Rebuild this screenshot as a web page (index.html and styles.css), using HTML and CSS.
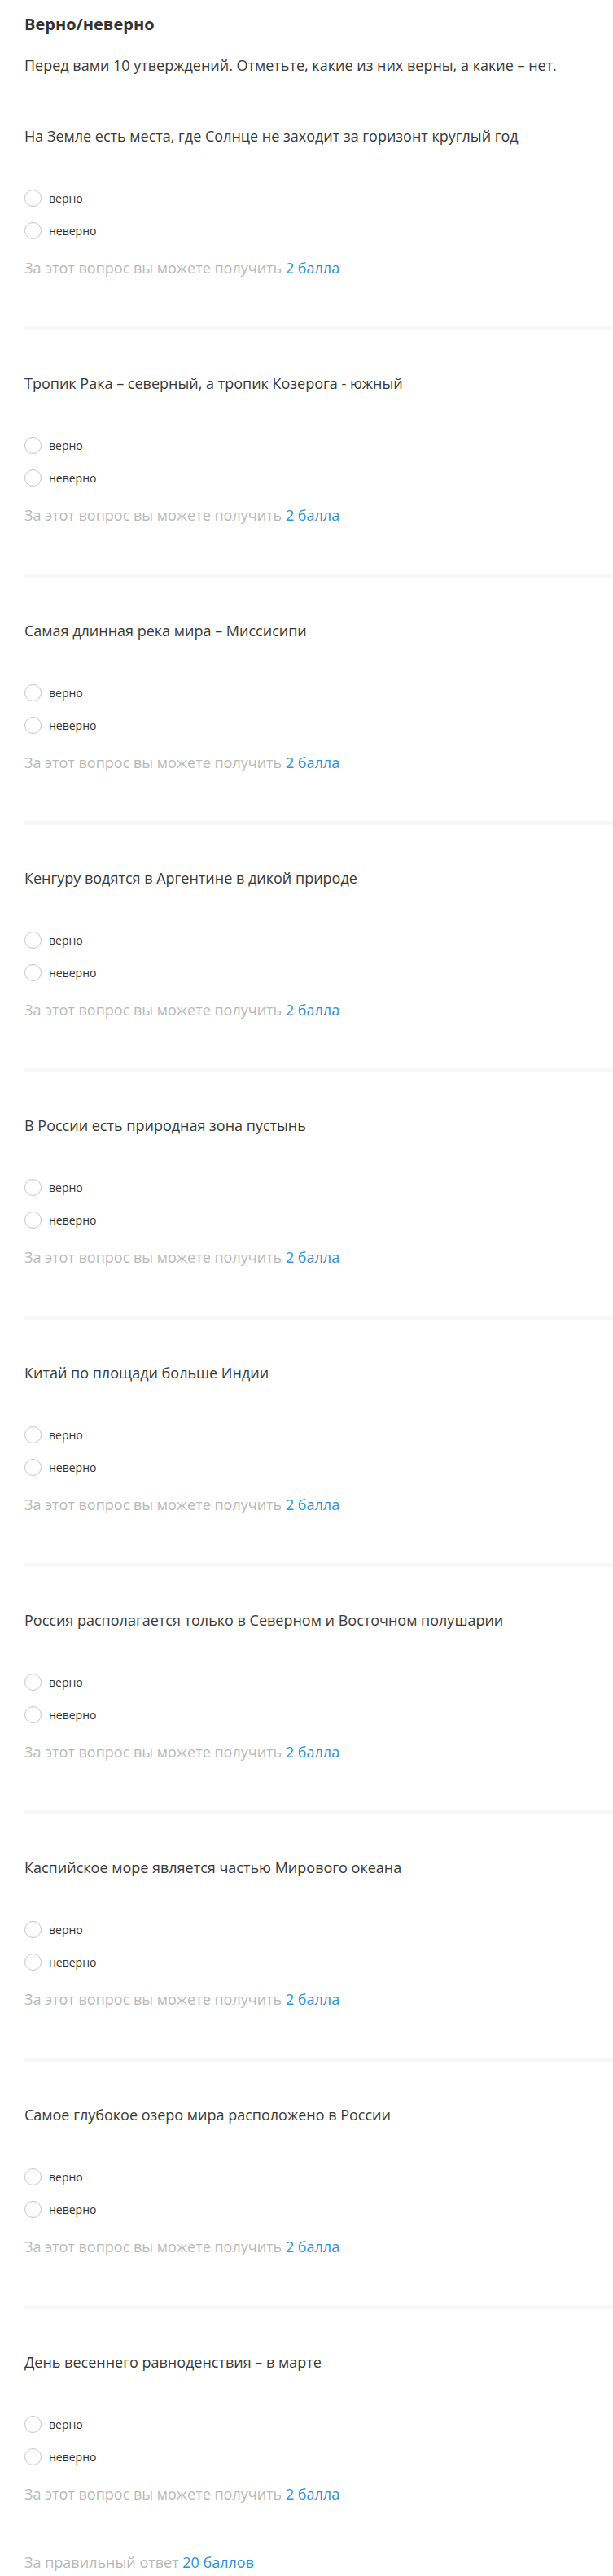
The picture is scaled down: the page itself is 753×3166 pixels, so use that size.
FILE: index.html
```html
<!DOCTYPE html>
<html lang="ru">
<head>
  <meta charset="UTF-8" />
  <meta name="viewport" content="width=device-width, initial-scale=1.0"/>
  <title>Верно/неверно</title>
  <link rel="stylesheet" href="styles.css">
</head>
<body>
  <div class="quiz">
    <h1 class="quiz-title">Верно/неверно</h1>
    <p class="quiz-intro">Перед вами 10 утверждений. Отметьте, какие из них верны, а какие – нет.</p>

    <div class="question">
      <div class="question-text">На Земле есть места, где Солнце не заходит за горизонт круглый год</div>
      <div class="options">
        <label class="option"><input type="radio" name="q1"> верно</label>
        <label class="option"><input type="radio" name="q1"> неверно</label>
      </div>
      <div class="points">За этот вопрос вы можете получить <span class="accent">2 балла</span></div>
    </div>

    <div class="question">
      <div class="question-text">Тропик Рака – северный, а тропик Козерога - южный</div>
      <div class="options">
        <label class="option"><input type="radio" name="q2"> верно</label>
        <label class="option"><input type="radio" name="q2"> неверно</label>
      </div>
      <div class="points">За этот вопрос вы можете получить <span class="accent">2 балла</span></div>
    </div>

    <div class="question">
      <div class="question-text">Самая длинная река мира – Миссисипи</div>
      <div class="options">
        <label class="option"><input type="radio" name="q3"> верно</label>
        <label class="option"><input type="radio" name="q3"> неверно</label>
      </div>
      <div class="points">За этот вопрос вы можете получить <span class="accent">2 балла</span></div>
    </div>

    <div class="question">
      <div class="question-text">Кенгуру водятся в Аргентине в дикой природе</div>
      <div class="options">
        <label class="option"><input type="radio" name="q4"> верно</label>
        <label class="option"><input type="radio" name="q4"> неверно</label>
      </div>
      <div class="points">За этот вопрос вы можете получить <span class="accent">2 балла</span></div>
    </div>

    <div class="question">
      <div class="question-text">В России есть природная зона пустынь</div>
      <div class="options">
        <label class="option"><input type="radio" name="q5"> верно</label>
        <label class="option"><input type="radio" name="q5"> неверно</label>
      </div>
      <div class="points">За этот вопрос вы можете получить <span class="accent">2 балла</span></div>
    </div>

    <div class="question">
      <div class="question-text">Китай по площади больше Индии</div>
      <div class="options">
        <label class="option"><input type="radio" name="q6"> верно</label>
        <label class="option"><input type="radio" name="q6"> неверно</label>
      </div>
      <div class="points">За этот вопрос вы можете получить <span class="accent">2 балла</span></div>
    </div>

    <div class="question">
      <div class="question-text">Россия располагается только в Северном и Восточном полушарии</div>
      <div class="options">
        <label class="option"><input type="radio" name="q7"> верно</label>
        <label class="option"><input type="radio" name="q7"> неверно</label>
      </div>
      <div class="points">За этот вопрос вы можете получить <span class="accent">2 балла</span></div>
    </div>

    <div class="question">
      <div class="question-text">Каспийское море является частью Мирового океана</div>
      <div class="options">
        <label class="option"><input type="radio" name="q8"> верно</label>
        <label class="option"><input type="radio" name="q8"> неверно</label>
      </div>
      <div class="points">За этот вопрос вы можете получить <span class="accent">2 балла</span></div>
    </div>

    <div class="question">
      <div class="question-text">Самое глубокое озеро мира расположено в России</div>
      <div class="options">
        <label class="option"><input type="radio" name="q9"> верно</label>
        <label class="option"><input type="radio" name="q9"> неверно</label>
      </div>
      <div class="points">За этот вопрос вы можете получить <span class="accent">2 балла</span></div>
    </div>

    <div class="question">
      <div class="question-text">День весеннего равноденствия – в марте</div>
      <div class="options">
        <label class="option"><input type="radio" name="q10"> верно</label>
        <label class="option"><input type="radio" name="q10"> неверно</label>
      </div>
      <div class="points">За этот вопрос вы можете получить <span class="accent">2 балла</span></div>
    </div>

    <div class="total">За правильный ответ <span class="accent">20 баллов</span></div>
  </div>
</body>
</html>
```

FILE: styles.css
```css
* {
  margin: 0;
  padding: 0;
  box-sizing: border-box;
  font-family: 'Open Sans', 'Noto Sans', sans-serif;
}

body {
  background: #fff;
  color: #333;
}

.quiz {
  padding: 18px 0 11px 30px;
}

.quiz-title {
  font-size: 20px;
  line-height: 24px;
  font-weight: 700;
  color: #333;
}

.quiz-intro {
  margin-top: 26px;
  font-size: 18px;
  line-height: 24px;
  color: #3a3a3a;
}

.question {
  padding-top: 53px;
}

.question:first-of-type {
  padding-top: 63px;
}

/* тонкая светлая полоса между вопросами */
.question + .question {
  border-top: 5px solid #f7f7f7;
}

.question-text {
  font-size: 18px;
  line-height: 24px;
  color: #3a3a3a;
}

.options {
  display: flex;
  flex-direction: column;
  gap: 16px;
  margin-top: 52px;
}

.option {
  display: flex;
  align-items: center;
  gap: 9px;
  height: 24px;
  font-size: 14px;
  color: #333;
  cursor: pointer;
}

.option input {
  appearance: none;
  -webkit-appearance: none;
  width: 21px;
  height: 21px;
  border: 1px solid #c4c4c4;
  border-radius: 50%;
  background: #fff;
  cursor: pointer;
}

.option input:checked {
  border: 6px solid #2f93d6;
}

.points {
  margin-top: 22px;
  margin-bottom: 60px;
  font-size: 18px;
  line-height: 24px;
  color: #b9b9b9;
}

.question:last-of-type .points {
  margin-bottom: 0;
}

.accent {
  color: #2f93d6;
}

.total {
  margin-top: 53px;
  font-size: 18px;
  line-height: 24px;
  color: #b9b9b9;
}
```
